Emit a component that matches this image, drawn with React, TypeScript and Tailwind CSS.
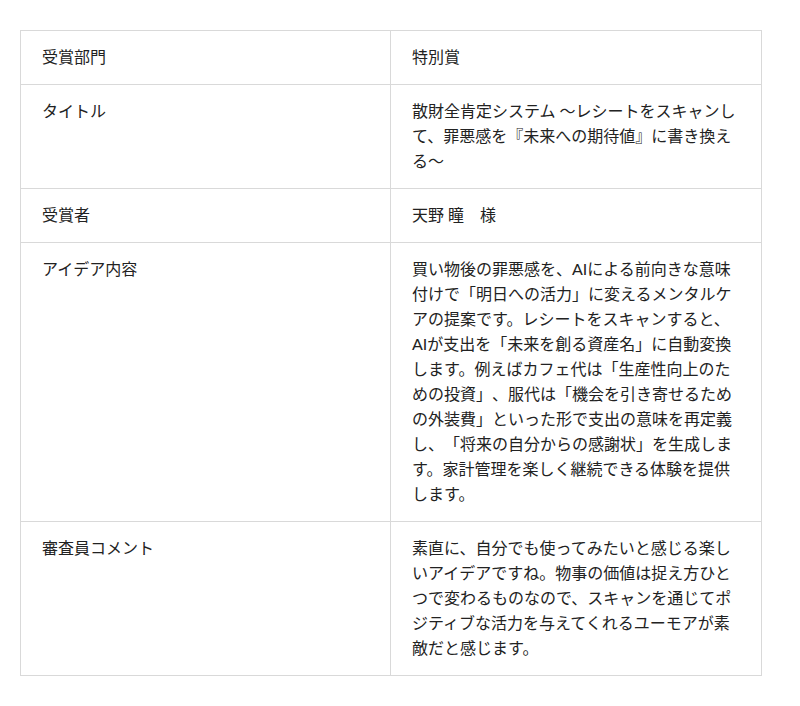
export default function App() {
  const rows: [string, string][] = [
    ["受賞部門", "特別賞"],
    ["タイトル", "散財全肯定システム ～レシートをスキャンして、罪悪感を『未来への期待値』に書き換える～"],
    ["受賞者", "天野 瞳　様"],
    [
      "アイデア内容",
      "買い物後の罪悪感を、AIによる前向きな意味付けで「明日への活力」に変えるメンタルケアの提案です。レシートをスキャンすると、AIが支出を「未来を創る資産名」に自動変換します。例えばカフェ代は「生産性向上のための投資」、服代は「機会を引き寄せるための外装費」といった形で支出の意味を再定義し、「将来の自分からの感謝状」を生成します。家計管理を楽しく継続できる体験を提供します。",
    ],
    [
      "審査員コメント",
      "素直に、自分でも使ってみたいと感じる楽しいアイデアですね。物事の価値は捉え方ひとつで変わるものなので、スキャンを通じてポジティブな活力を与えてくれるユーモアが素敵だと感じます。",
    ],
  ];
  return (
    <div
      className="w-[800px] h-[706px] bg-white pt-[30px] pl-[20px] [text-spacing-trim:space-all]"
      style={{ fontFamily: 'Lato, "Noto Sans CJK JP", sans-serif' }}
    >
      <table className="w-[742px] border-collapse table-fixed text-[16px] leading-[25px] text-[#222]">
        <colgroup>
          <col className="w-[370px]" />
          <col />
        </colgroup>
        <tbody>
          {rows.map(([k, v]) => (
            <tr key={k}>
              <td className="border border-[#d9d9d9] align-top px-[21px] pt-[13px] pb-[15px]">{k}</td>
              <td className="border border-[#d9d9d9] align-top px-[21px] pt-[13px] pb-[15px]">{v}</td>
            </tr>
          ))}
        </tbody>
      </table>
    </div>
  );
}
